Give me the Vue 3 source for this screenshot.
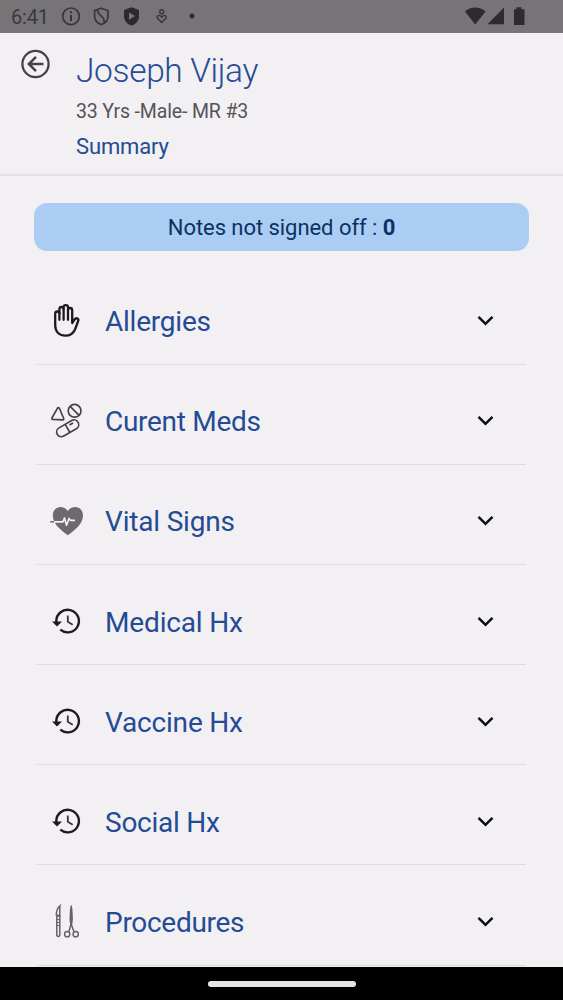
<script setup>
const sections = [
  { label: 'Allergies', icon: 'hand', width: 106 },
  { label: 'Curent Meds', icon: 'meds', width: 156 },
  { label: 'Vital Signs', icon: 'heart', width: 130 },
  { label: 'Medical Hx', icon: 'history', width: 138 },
  { label: 'Vaccine Hx', icon: 'history', width: 138 },
  { label: 'Social Hx', icon: 'history', width: 115 },
  { label: 'Procedures', icon: 'tools', width: 139.500 },
]
</script>

<template>
  <div class="screen">
    <div class="status">
      <span class="time">6:41</span>
      <svg class="status-left" width="140" height="33" viewBox="60 0 140 33">
        <g fill="none" stroke="#38363a" stroke-width="1.7">
          <circle cx="71" cy="16.3" r="8.3" />
          <path d="M71 15v6M71 11.2v2" stroke-width="2" />
          <path d="M101.300 8.200L108 10.500V16C108 20 105.200 23.200 101.300 24.500C97.400 23.200 94.600 20 94.600 16V10.500Z" />
          <path d="M97.500 10C97.500 16.500 105.500 15.500 104 22.500" stroke-width="1.700" />
          <circle cx="161.700" cy="11.800" r="2" stroke-width="1.400" />
          <path d="M161.700 22.500L157.600 18.300C156 15.800 159.500 14 161.700 17C163.900 14 167.400 15.800 165.800 18.300Z" stroke-width="1.500" />
        </g>
        <path d="M131.500 7.200L139 10V16C139 20.500 135.800 24.200 131.500 25.600C127.200 24.200 124 20.500 124 16V10Z" fill="#2b292d" />
        <path d="M129 12.500V19.800L135.200 16.100Z" fill="#777478" />
        <circle cx="192" cy="16" r="2.400" fill="#2b292d" />
      </svg>
      <svg class="status-right" width="66" height="33" viewBox="462 0 66 33" fill="#2d2b2f">
        <path d="M465 11.500C470.500 6 480 6 485.500 11.500L475.200 24.500Z" />
        <path d="M504 7.500V24.300H487.500Z" />
        <path d="M514 9.200H516.500V7.200H521.500V9.200H524.500V25H514Z" />
      </svg>
    </div>

    <header class="header">
      <svg class="back" width="30" height="30" viewBox="0 0 30 30" fill="none" stroke="#444246">
        <circle cx="14.500" cy="15" r="13.100" stroke-width="2.300" />
        <path d="M22.500 15H8.500M15 7.800L7.800 15L15 22.200" stroke-width="2.500" />
      </svg>
      <div class="patient">
        <h1>Joseph Vijay</h1>
        <p class="details">33 Yrs -Male- MR #3</p>
        <p class="summary">Summary</p>
      </div>
    </header>

    <main>
      <div class="notice"><span>Notes not signed off : <b>0</b></span></div>
      <section v-for="s in sections" :key="s.label" class="row">
        <svg class="icon" width="36" height="36" viewBox="0 0 36 36" fill="none">
          <g v-if="s.icon === 'hand'" stroke="#1c1a20" stroke-width="2.300" stroke-linejoin="round" stroke-linecap="round">
            <path d="M7.200 22V10.800Q7.200 8.500 9.300 8.500Q11.400 8.500 11.400 10.500V6.200Q11.400 4 13.500 4Q15.600 4 15.600 6V4Q15.600 2.200 17.800 2.200Q20 2.200 20 4V7Q20 5 22.100 5Q24.200 5 24.200 7.200V20L26.500 16.500Q28 14.600 29.500 15.500Q31 16.200 30 18.500L27 26.500C25 31 21.500 32.700 17.500 32.700C11.500 32.700 7.200 29 7.200 22Z" />
            <path d="M11.400 10V16.800M15.600 6V16.800M20 7V16.800" />
          </g>
          <g v-else-if="s.icon === 'meds'" stroke="#454347" stroke-width="1.700" stroke-linejoin="round">
            <path d="M9.400 5.300Q10.500 3.800 11.500 5.500L15.700 15.500Q16 17 14.500 16.900L5 16.400Q3.200 16.200 4.200 14.500Z" />
            <circle cx="26.600" cy="7.800" r="6.400" />
            <path d="M22.200 3.400L31 12.400" />
            <g transform="rotate(-30 19.700 25.300)">
              <rect x="7.700" y="20.600" width="24" height="9.400" rx="4.700" />
              <path d="M19.500 21V30M23 23.300H27" />
            </g>
          </g>
          <g v-else-if="s.icon === 'heart'">
            <path d="M19.800 32.200C15 28.500 4.800 22 4.800 12.500C4.800 3 15.500 1.500 19.800 8C24.100 1.500 35 3 35 12.500C35 22 24.600 28.500 19.800 32.200Z" fill="#6d6a6e" />
            <path d="M2.300 18.800H6" stroke="#6d6a6e" stroke-width="1.600" />
            <path d="M6 18.800H14.800L16.500 15L18.500 22.300L21 15.500L22.500 17.300H27" stroke="#f2f0f3" stroke-width="1.700" stroke-linejoin="round" />
          </g>
          <g v-else-if="s.icon === 'history'" transform="translate(0 -0.500)">
            <path d="M8.300 19V17.600A11.300 11.300 0 1 1 12.300 26.200" stroke="#1c1a1e" stroke-width="2.400" />
            <path d="M4 18H14L9 23Z" fill="#1c1a1e" />
            <path d="M19.800 12V18.300L24.700 21.300" stroke="#38363a" stroke-width="1.800" />
          </g>
          <g v-else stroke="#666367" stroke-width="1.500" transform="translate(0 -0.500)">
            <path d="M12 2.300C9.300 4.500 8.300 8 8.300 11.500L11.800 12.300V3Z" />
            <path d="M8.800 12.500H11.800V32Q10.300 34 8.800 32Z" />
            <path d="M8.800 16H11.800M8.800 19H11.800M8.800 22H11.800" stroke-width="1" />
            <path d="M23.200 2V14M22.800 4.500L22.200 15L22.800 21.500L20.800 28.500M23.600 4.500L24.200 15L23.500 21.500L26 28.500M23.200 14V22" />
            <circle cx="19.200" cy="30.700" r="2.600" />
            <circle cx="27.700" cy="30.700" r="2.600" />
          </g>
        </svg>
        <svg class="label" :width="s.width + 4" height="40">
          <text x="0" y="29.800" :textLength="s.width" lengthAdjust="spacing">{{ s.label }}</text>
        </svg>
        <svg class="chevron" width="18" height="12" viewBox="0 0 18 12" fill="none">
          <path d="M1.500 1.800L8.500 8.800L15.500 1.800" stroke="#0c0b0d" stroke-width="2.500" />
        </svg>
      </section>
    </main>

    <footer class="nav"><span></span></footer>
  </div>
</template>

<style>
body { margin: 0; background: #f2f0f3; }
</style>

<style scoped>
.screen {
  width: 563px;
  height: 1000px;
  display: flex;
  flex-direction: column;
  overflow: hidden;
  background: #f2f0f3;
  font-family: Roboto, sans-serif;
}
.status {
  height: 33px;
  flex: none;
  display: flex;
  background: #777478;
}
.time {
  width: 49px;
  padding-left: 11px;
  font-size: 20px;
  line-height: 35px;
  letter-spacing: -0.2px;
  color: #3a383c;
}
.status-right { margin-left: 262px; }
.header {
  height: 141px;
  flex: none;
  display: flex;
  border-bottom: 2px solid #e2e0e3;
}
.back { margin: 16px 0 0 21px; }
.patient { margin-left: 25px; white-space: nowrap; }
h1 {
  margin: 17px 0 0;
  font-size: 33.500px;
  line-height: 42px;
  font-weight: 300;
  letter-spacing: -0.350px;
  color: #274c94;
}
p { margin: 0; }
.details {
  margin-top: 6px;
  font-size: 19.500px;
  line-height: 27px;
  letter-spacing: -0.140px;
  color: #565458;
}
.summary {
  margin-top: 7px;
  font-size: 22px;
  line-height: 29px;
  letter-spacing: -0.150px;
  color: #224b91;
}
main { flex: 1; min-height: 0; overflow: hidden; }
.notice {
  height: 48px;
  margin: 27.400px 34.400px 13.100px;
  border-radius: 13px;
  background: #abcdf4;
  color: #0b3263;
  font-size: 22px;
  line-height: 50px;
  letter-spacing: -0.050px;
  text-align: center;
}
.row {
  box-sizing: border-box;
  height: 100.170px;
  margin: 0 37px;
  padding: 14px 31px 0 11px;
  display: flex;
  align-items: center;
  border-bottom: 1px solid #dddbde;
}
.label {
  margin-left: 21px;
  font-size: 28px;
  fill: #244b94;
}
.chevron { margin-left: auto; }
.nav {
  height: 33px;
  flex: none;
  display: flex;
  align-items: center;
  justify-content: center;
  background: #000;
}
.nav span {
  width: 148px;
  height: 6px;
  border-radius: 3px;
  background: #e8e6e8;
}
</style>
